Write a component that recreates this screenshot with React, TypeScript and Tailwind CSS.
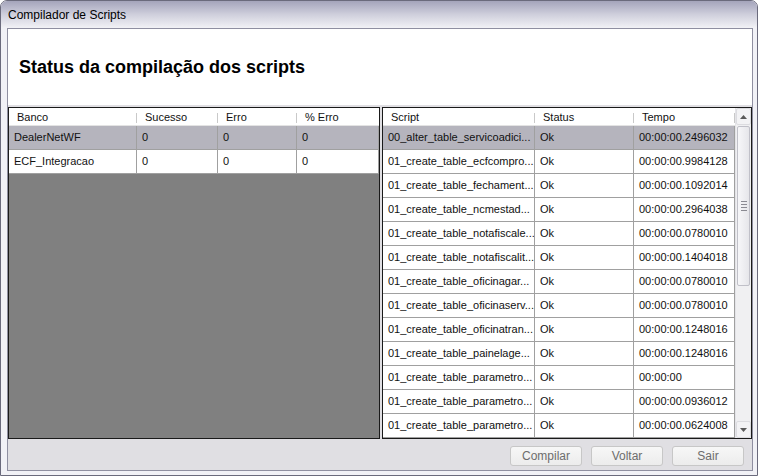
const leftRows = [
  { banco: "DealerNetWF", sucesso: "0", erro: "0", pct: "0", selected: true },
  { banco: "ECF_Integracao", sucesso: "0", erro: "0", pct: "0", selected: false },
];

const scripts = [
  ["00_alter_table_servicoadici...", "00:00:00.2496032"],
  ["01_create_table_ecfcompro...", "00:00:00.9984128"],
  ["01_create_table_fechament...", "00:00:00.1092014"],
  ["01_create_table_ncmestad...", "00:00:00.2964038"],
  ["01_create_table_notafiscale...", "00:00:00.0780010"],
  ["01_create_table_notafiscalit...", "00:00:00.1404018"],
  ["01_create_table_oficinagar...", "00:00:00.0780010"],
  ["01_create_table_oficinaserv...", "00:00:00.0780010"],
  ["01_create_table_oficinatran...", "00:00:00.1248016"],
  ["01_create_table_painelage...", "00:00:00.1248016"],
  ["01_create_table_parametro...", "00:00:00"],
  ["01_create_table_parametro...", "00:00:00.0936012"],
  ["01_create_table_parametro...", "00:00:00.0624008"],
];

function HeaderCell({ label, last }: { label: string; last?: boolean }) {
  return (
    <div className="relative h-[18px] flex items-center pt-[2px] pl-[8px] bg-white border-b border-[#e3e3e3] whitespace-nowrap overflow-hidden">
      {label}
      {!last && <span className="absolute right-0 top-[5px] h-[10px] w-px bg-[#c9c9c9]" />}
    </div>
  );
}

function Cell({ text, sel }: { text: string; sel?: boolean }) {
  return (
    <div
      className={`h-[24px] flex items-center pl-[5px] border-r border-b border-[#a0a0a0] whitespace-nowrap overflow-hidden ${
        sel ? "bg-[#b5b4bd]" : "bg-white"
      }`}
    >
      {text}
    </div>
  );
}

function Arrow({ up }: { up?: boolean }) {
  return (
    <div className="h-[17px] flex items-center justify-center bg-[#f3f3f5] border border-[#dcdce0] rounded-[2px]">
      <svg width="7" height="4" viewBox="0 0 7 4">
        {up ? <path d="M0 4 L3.5 0 L7 4 Z" fill="#5a5a5a" /> : <path d="M0 0 L3.5 4 L7 0 Z" fill="#5a5a5a" />}
      </svg>
    </div>
  );
}

function Btn({ label }: { label: string }) {
  return (
    <div className="w-[72px] h-[20px] flex items-center justify-center rounded-[3px] border border-[#c7c7c7] bg-gradient-to-b from-[#f7f7f7] to-[#ececec] text-[12px] text-[#6d6d6d]">
      {label}
    </div>
  );
}

export default function App() {
  return (
    <div className="w-[758px] h-[476px] flex flex-col bg-[#f1f1f6] border border-[#6a6a7c] rounded-t-[7px] overflow-hidden font-['Liberation_Sans',Arial,sans-serif] text-[11px] text-[#111]">
      <div className="h-[27px] flex items-center pl-[7px] text-[12px] text-black bg-gradient-to-b from-[#a4a4bb] via-[#cfcfdc] to-[#f2f2f6]">
        Compilador de Scripts
      </div>
      <div className="flex-1 flex pl-[6px] pr-[5px] pb-[4px]">
        <div className="flex-1 flex flex-col border border-[#8f8fa1] bg-[#e0dfe3]">
          <div className="h-[76px] bg-white flex items-center pl-[11px]">
            <h1 className="text-[18px] font-bold leading-none text-black">Status da compilação dos scripts</h1>
          </div>
          <div className="mt-[2px] h-[332px] flex gap-[2px]">
            <div className="w-[372px] border border-[#1a1a1a] bg-[#808080] flex flex-col">
              <div className="grid grid-cols-[128px_81px_79px_82px]">
                <HeaderCell label="Banco" />
                <HeaderCell label="Sucesso" />
                <HeaderCell label="Erro" />
                <HeaderCell label="% Erro" last />
                {leftRows.map((r) => (
                  <div key={r.banco} className="contents">
                    <Cell text={r.banco} sel={r.selected} />
                    <Cell text={r.sucesso} sel={r.selected} />
                    <Cell text={r.erro} sel={r.selected} />
                    <Cell text={r.pct} sel={r.selected} />
                  </div>
                ))}
              </div>
            </div>
            <div className="flex-1 border border-[#1a1a1a] bg-white flex overflow-hidden">
              <div className="flex-1 grid grid-cols-[152px_99px_101px] content-start">
                <HeaderCell label="Script" />
                <HeaderCell label="Status" />
                <HeaderCell label="Tempo" />
                {scripts.map(([name, time], i) => (
                  <div key={i} className="contents">
                    <Cell text={name} sel={i === 0} />
                    <Cell text="Ok" sel={i === 0} />
                    <Cell text={time} sel={i === 0} />
                  </div>
                ))}
              </div>
              <div className="w-[16px] flex flex-col bg-[#f0f0f2] border-l border-[#e4e4e8]">
                <Arrow up />
                <div className="flex-1 relative">
                  <div className="absolute left-[1px] right-[1px] top-[1px] h-[160px] rounded-[2px] border border-[#c0c0c8] bg-gradient-to-r from-[#f7f7f9] to-[#e6e6ea] flex flex-col items-center justify-center gap-[2px]">
                    <span className="w-[6px] h-px bg-[#8a8a92]" />
                    <span className="w-[6px] h-px bg-[#8a8a92]" />
                    <span className="w-[6px] h-px bg-[#8a8a92]" />
                    <span className="w-[6px] h-px bg-[#8a8a92]" />
                  </div>
                </div>
                <Arrow />
              </div>
            </div>
          </div>
          <div className="flex-1 flex justify-end items-start gap-[9px] pt-[7px] pr-[8px]">
            <Btn label="Compilar" />
            <Btn label="Voltar" />
            <Btn label="Sair" />
          </div>
        </div>
      </div>
    </div>
  );
}
